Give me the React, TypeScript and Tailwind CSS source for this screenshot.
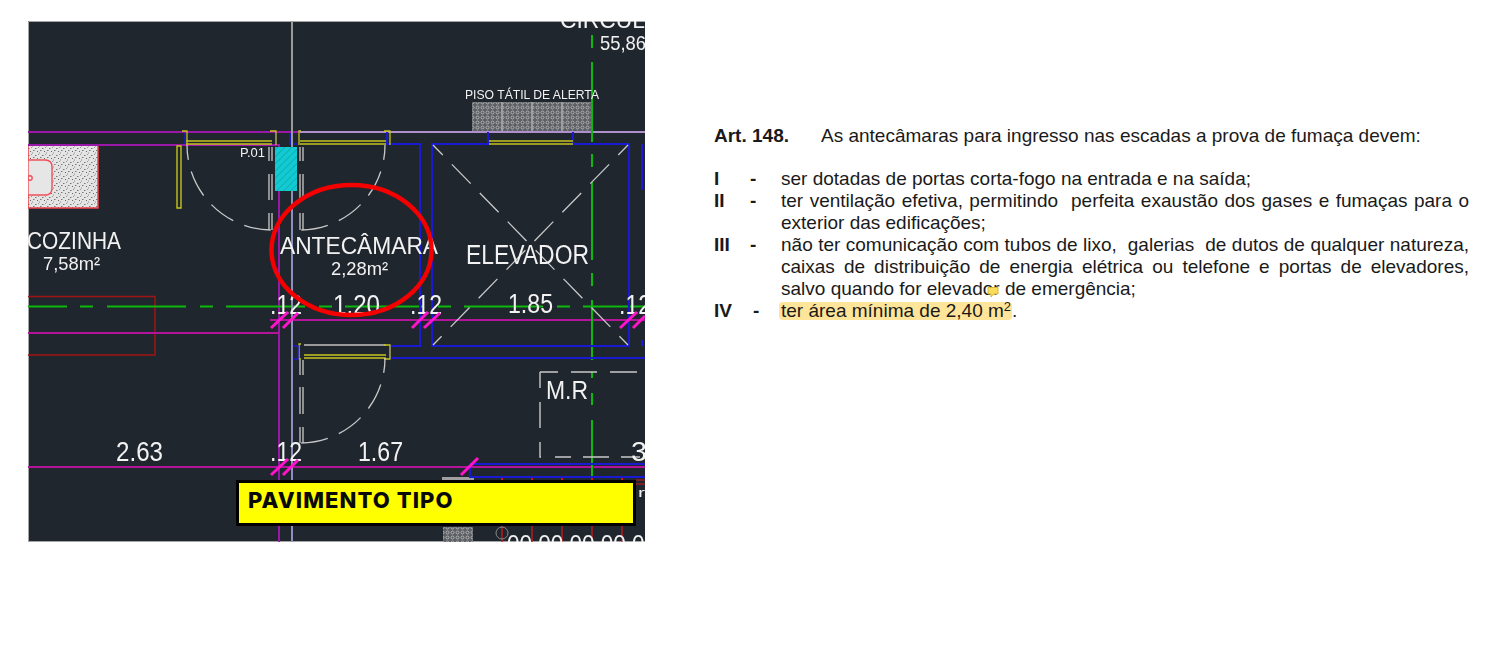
import React from "react";

type TProps = { x: number; y: number; w: number; s: number; children: React.ReactNode };

function T({ x, y, w, s, children }: TProps) {
  return (
    <text
      x={x}
      y={y}
      fontSize={s}
      textLength={w}
      lengthAdjust="spacingAndGlyphs"
      fill="#f2f2f2"
      fontFamily="'Liberation Sans', Arial, sans-serif"
    >
      {children}
    </text>
  );
}

function L({ d, c, w = 2, dash, off }: { d: string; c: string; w?: number; dash?: string; off?: number }) {
  return <path d={d} fill="none" stroke={c} strokeWidth={w} strokeDasharray={dash} strokeDashoffset={off} />;
}

const PURPLE = "#9a18a8";
const MAG = "#b4149a";
const BLUE = "#1a1ad2";
const YEL = "#c4c41c";
const GRN = "#0cb80c";
const WHT = "#c8c8c8";
const TICK = "#ff14cc";

function Drawing() {
  return (
    <svg viewBox="28 21 617 521" width={617} height={521} className="block blur-[0.3px]">
      <defs>
        <pattern id="speck" width="7" height="7" patternUnits="userSpaceOnUse">
          <rect width="7" height="7" fill="#e4e4e4" />
          <rect x="0" y="1" width="1.5" height="1" fill="#777" />
          <rect x="3" y="0" width="1" height="1" fill="#999" />
          <rect x="5" y="3" width="1.5" height="1" fill="#777" />
          <rect x="2" y="4" width="1" height="1" fill="#666" />
          <rect x="4" y="5.5" width="1" height="1" fill="#888" />
        </pattern>
        <pattern id="tatil" width="5" height="5" patternUnits="userSpaceOnUse">
          <rect width="5" height="5" fill="#5c6066" />
          <circle cx="2.5" cy="2.5" r="1.5" fill="none" stroke="#b4b4b4" strokeWidth="0.9" />
        </pattern>
        <pattern id="hatch" width="5" height="5" patternUnits="userSpaceOnUse" patternTransform="rotate(45)">
          <rect width="5" height="5" fill="#12cbd2" />
          <rect width="1" height="5" fill="#10aeb8" />
        </pattern>
      </defs>

      <rect x="28" y="21" width="617" height="521" fill="#20262e" />
      <path d="M28.5 542 V21.5 H645" fill="none" stroke="#a5a5a5" strokeWidth="1" />
      <path d="M28 541.5 H645" fill="none" stroke="#a5a5a5" strokeWidth="1" />

      {/* kitchen counter */}
      <rect x="28" y="145" width="70" height="63" fill="url(#speck)" stroke="#f0404a" strokeWidth="1.5" />
      <path d="M28 160 H45 Q52 160 52 167 V188 Q52 195 45 195 H28 Z" fill="#e6e6e6" stroke="#f0505a" strokeWidth="1.4" />
      <circle cx="30" cy="178" r="2.2" fill="none" stroke="#f0505a" strokeWidth="1.4" />

      {/* tactile floor */}
      <rect x="472" y="102" width="120" height="30" fill="url(#tatil)" />
      <L d="M502 102 V132 M532 102 V132 M562 102 V132" c="#a8a8a8" w={1.5} />
      <rect x="442" y="477" width="32" height="5" fill="#a0a0a0" />
      <rect x="443" y="527" width="30" height="15" fill="url(#tatil)" />

      {/* red bench */}
      <rect x="20" y="296.5" width="135" height="58.5" fill="none" stroke="#a01414" strokeWidth="1.5" />

      {/* walls */}
      <L d="M28 132 H300" c={PURPLE} />
      <L d="M300 132 H645" c="#b090cc" />
      <L d="M28 145 H279 V542" c={PURPLE} />
      <L d="M270 320 H645" c={MAG} />
      <L d="M28 333 H279" c={MAG} />
      <L d="M28 467 H645" c={MAG} />

      {/* green axes */}
      <L d="M28 306.5 H645" c={GRN} dash="39 13 13 14 79 14 13 13 79 14 13 13 79 14 13 13 79 14 13 13 79 14 13 13 79 14 13 13" />
      <L d="M592 35 V48 M592 62 V142 M592 154 V167 M592 182 V260 M592 273 V286 M592 300 V360 M592 372 V378 M592 393 V405 M592 420 V480" c={GRN} />

      {/* blue walls */}
      <L d="M387 132 V144 H420 V346 H390" c={BLUE} />
      <L d="M390 346 V358 H645" c={BLUE} />
      <L d="M488 132 V144 H432 V346 H629 V144 H573 V132" c={BLUE} />
      <L d="M642 144 V190 M642 340 V346" c={BLUE} />
      <L d="M185 133 V144 M276 133 V144 M290 133 V144 H298" c={BLUE} w={1.5} />
      <L d="M470 467 V477 H645 M470 464 H645" c={BLUE} />

      {/* doors */}
      <L d="M186 141 H272 M186 144 H272 M300 141 H386 M300 144 H386 M489 141 H573 M489 144 H573" c={YEL} w={1.3} />
      <L d="M182 131 H187 V145 M270 131 H276 V145 M301 131 H299 V145 M384 131 H390 V145" c={YEL} w={1.3} />
      <path d="M177 146 H181 V208 H177 Z" fill="none" stroke={YEL} strokeWidth="1.4" />
      <L d="M304 345 H386" c="#999" />
      <L d="M304 355 H386 M304 358 H386" c={YEL} w={1.3} />
      <L d="M301 344 H299 V359 H301 M384 345 H390 V359 H384" c={YEL} w={1.3} />
      <L d="M294 346 H298 V359 H294" c={BLUE} w={1.5} />

      {/* door leaves */}
      <L d="M269 147 V230 M272 147 V230 M300 147 V230 M303 147 V230" c={WHT} w={1.3} dash="14 13 26 13 18 100" />
      <L d="M300 360 V444 M303 360 V444" c={WHT} w={1.3} dash="15 12 27 13 16 100" />
      <L d="M187 145 A85 85 0 0 0 272 230" c={WHT} w={1.3} dash="27 12" off={12} />
      <L d="M385 145 A85 85 0 0 1 300 230" c={WHT} w={1.3} dash="27 12" off={12} />
      <L d="M385 358 A85 85 0 0 1 300 443" c={WHT} w={1.3} dash="27 12" off={12} />

      {/* lift X */}
      <L d="M433 145 L628 345" c={WHT} w={1.3} dash="27 13" off={13} />
      <L d="M628 145 L433 345" c={WHT} w={1.3} dash="27 13" off={13} />

      {/* vertical grid line */}
      <L d="M292 21 V160" c="#9a9a9a" />
      <L d="M292 160 V542" c="#8f8fbe" />

      {/* cyan shaft */}
      <rect x="275" y="147" width="22" height="44" fill="url(#hatch)" />

      {/* machine room */}
      <L d="M540 372 H640" c={WHT} w={1.4} dash="18 13 26 13 27 100" />
      <L d="M540 372 V457 H640" c={WHT} w={1.4} dash="16 14 26 14 16 14 16 12 26 12 26 10 26" />

      {/* bottom right */}
      <L d="M502 478 V482 M532 478 V482 M562 478 V482 M592 478 V482 M622 478 V482" c="#d01818" />
      <L d="M636 480 H645 M636 484 H645" c="#d01818" w={1} />
      <L d="M532 525 V542 M562 525 V542 M592 525 V542 M622 525 V542 M502 525 V542" c="#d01818" w={1.3} />
      <circle cx="502" cy="533" r="6" fill="none" stroke="#8a8a8a" strokeWidth="1" />

      {/* labels */}
      <T x={560} y={28} w={85} s={24}>CIRCUL</T>
      <T x={600} y={50} w={46} s={21}>55,86</T>
      <T x={465} y={99} w={134} s={13.5}>PISO TÁTIL DE ALERTA</T>
      <T x={240} y={157} w={25} s={12.5}>P.01</T>
      <T x={27} y={249} w={94} s={24}>COZINHA</T>
      <T x={43} y={270} w={57} s={19}>7,58m²</T>
      <T x={280} y={254} w={158} s={24}>ANTECÂMARA</T>
      <T x={331} y={275} w={57} s={19}>2,28m²</T>
      <T x={466} y={264} w={123} s={27}>ELEVADOR</T>
      <T x={270} y={314} w={32} s={27}>.12</T>
      <T x={333} y={314} w={47} s={27}>1.20</T>
      <T x={410} y={314} w={32} s={27}>.12</T>
      <T x={508} y={313} w={45} s={27}>1.85</T>
      <T x={619} y={314} w={32} s={27}>.12</T>
      <T x={546} y={399} w={42} s={26}>M.R</T>
      <T x={116} y={461} w={47} s={27}>2.63</T>
      <T x={270} y={461} w={32} s={27}>.12</T>
      <T x={358} y={461} w={45} s={27}>1.67</T>
      <T x={631} y={461} w={16} s={27}>3</T>
      <T x={507} y={552} w={150} s={24}>00 00 00 00 00</T>
      <T x={638} y={497} w={7} s={13}>r</T>

      {/* dimension ticks */}
      <L
        d="M271 328 L288 312 M283 328 L298 313 M412 328 L428 312 M424 328 L440 313 M620 328 L637 312 M633 328 L645 316 M271 475 L288 459 M283 475 L298 460 M461 475 L478 458"
        c={TICK}
        w={3}
      />

      {/* highlight ring */}
      <ellipse cx="351.5" cy="250" rx="80" ry="65" fill="none" stroke="#f40000" strokeWidth="4.5" />
    </svg>
  );
}

const J = "text-justify [text-align-last:justify]";

function Row({ n, dash = "", children }: { n: string; dash?: string; children: React.ReactNode }) {
  return (
    <div className="grid grid-cols-[36px_31px_1fr]">
      <span className="font-bold">{n}</span>
      <span className={`font-bold ${dash}`}>-</span>
      <div>{children}</div>
    </div>
  );
}

export default function App() {
  return (
    <div className="w-[1500px] h-[652px] bg-white flex items-start overflow-hidden font-['Liberation_Sans',Arial,sans-serif]">
      <div className="relative ml-[28px] mt-[21px] w-[617px] h-[521px] shrink-0">
        <Drawing />
        <div className="absolute left-[208px] top-[459px] w-[400px] h-[46px] bg-[#ffff00] border-[3px] border-black flex items-center pl-[9px] pb-[6px]">
          <span className="font-['Inter',sans-serif] font-extrabold text-[22px] text-[#0a0a0a] tracking-[1.1px]">PAVIMENTO TIPO</span>
        </div>
      </div>
      <div className="relative ml-[69px] mt-[125px] w-[755px] text-[19px] leading-[22px] text-[#1a1a1a]">
        <div className="flex mb-[21px]">
          <span className="font-bold w-[107px]">Art. 148.</span>
          <span>As antecâmaras para ingresso nas escadas a prova de fumaça devem:</span>
        </div>
        <Row n="I">ser dotadas de portas corta-fogo na entrada e na saída;</Row>
        <Row n="II">
          <div className={J}>ter ventilação efetiva, permitindo {"\u00a0"}perfeita exaustão dos gases e fumaças para o</div>
          <div>exterior das edificações;</div>
        </Row>
        <Row n="III">
          <div className={J}>não ter comunicação com tubos de lixo, {"\u00a0"}galerias {"\u00a0"}de dutos de qualquer natureza,</div>
          <div className={J}>caixas de distribuição de energia elétrica ou telefone e portas de elevadores,</div>
          <div>salvo quando for elevador de emergência;</div>
        </Row>
        <Row n="IV" dash="pl-[3px]">
          <span className="inline-block h-[18px] leading-[18px] bg-[#ffe599] rounded-[4px] -ml-[2px] pl-[2px] pr-[1px]">
            ter área mínima de 2,40 m<sup className="text-[13px] leading-none">2</sup>
          </span>
          .
        </Row>
        <svg viewBox="0 0 12 12" width={12} height={12} className="absolute left-[273px] top-[161px]">
          <path d="M1 1.5 H11 V8 H6.5 L4 11 V8 H1 Z" fill="#f8dc5a" stroke="#d8b832" strokeWidth="1" />
        </svg>
      </div>
    </div>
  );
}
